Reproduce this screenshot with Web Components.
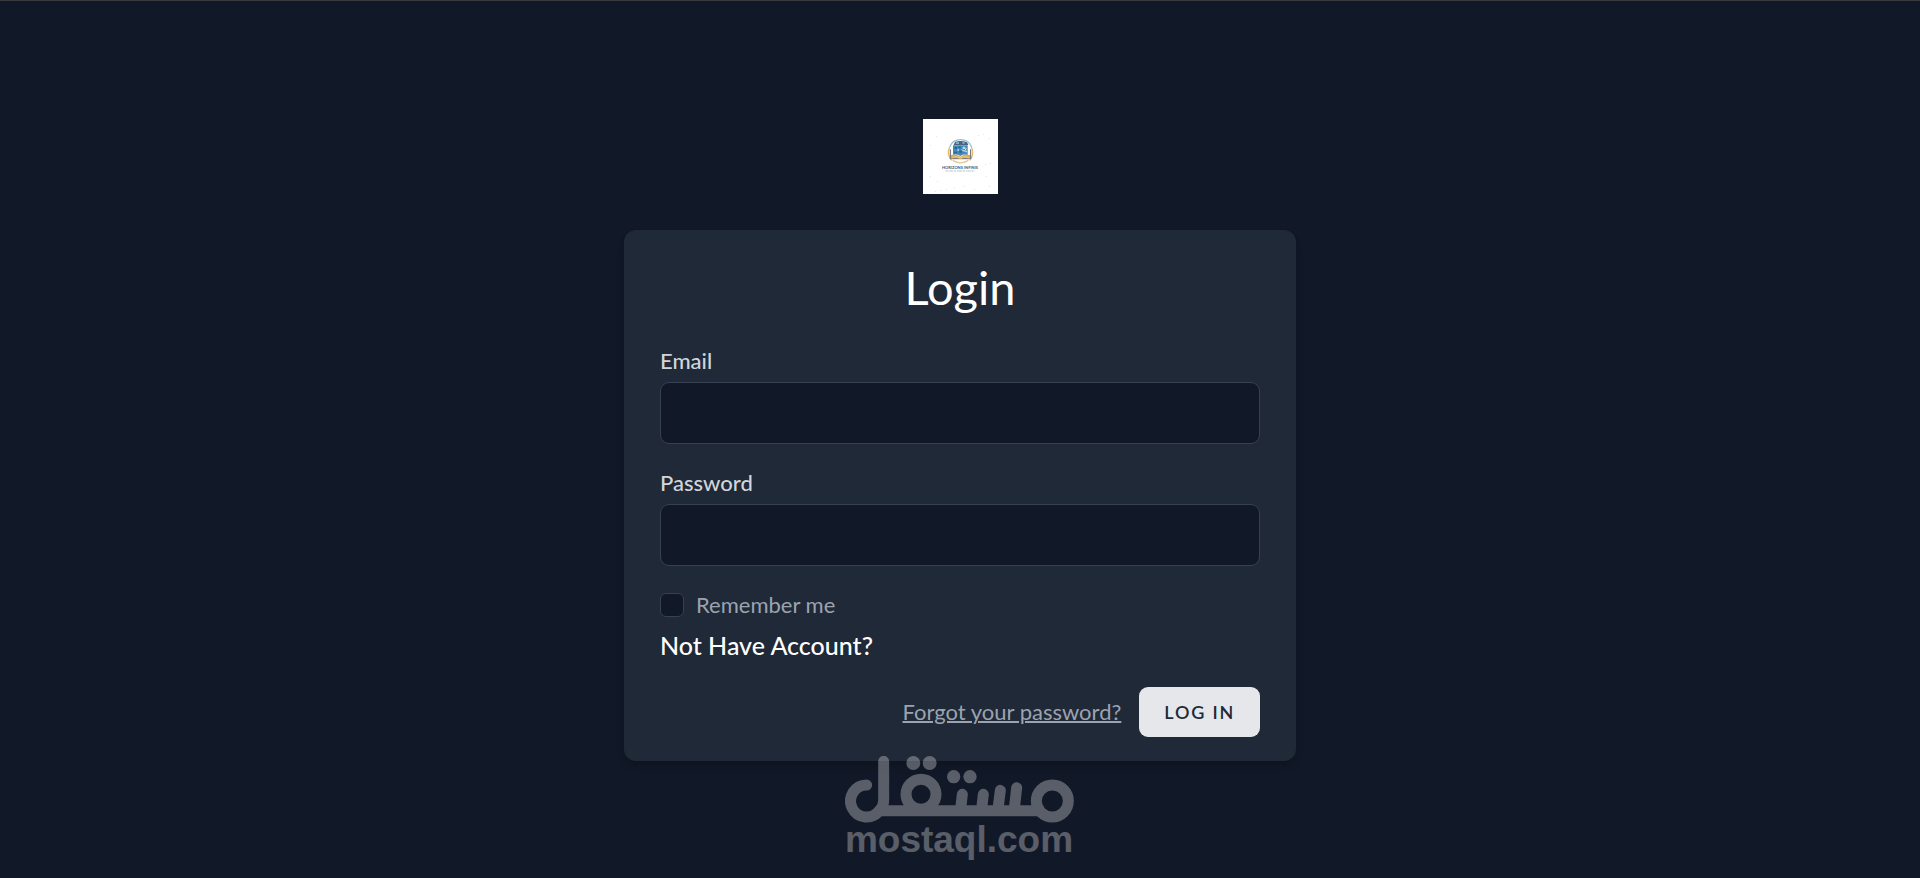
<!DOCTYPE html>
<html lang="en">
<head>
<meta charset="utf-8">
<meta name="viewport" content="width=device-width, initial-scale=1">
<title>Login</title>
<style>
    body {
        margin: 0;
        background: #111827;
        font-family: Lato, "Open Sans", sans-serif;
    }
</style>
</head>
<body>
<guest-layout>
    <app-logo slot="logo"></app-logo>
    <login-form heading="Login">
        <form-field name="email" type="email" label="Email"></form-field>
        <form-field name="password" type="password" label="Password"></form-field>
        <check-field name="remember">Remember me</check-field>
        <text-link slot="register" kind="plain" href="#register">Not Have Account?</text-link>
        <text-link slot="actions" kind="muted" href="#forgot">Forgot your password?</text-link>
        <primary-button slot="actions">Log in</primary-button>
    </login-form>
    <site-mark slot="mark">mostaql.com</site-mark>
</guest-layout>

<script>
class GuestLayout extends HTMLElement {
    constructor(){
        super();
        this.attachShadow({mode:'open'}).innerHTML = `
            <style>
                :host{
                    display: flex;
                    flex-direction: column;
                    align-items: center;
                    justify-content: center;
                    gap: 36px;
                    position: relative;
                    box-sizing: border-box;
                    min-height: 100vh;
                    padding-top: 1px;
                    border-top: 1px solid #3a3a3e;
                    background: #111827;
                }
                main{
                    box-sizing: border-box;
                    width: 100%;
                    max-width: 672px;
                    padding: 24px 36px;
                    border-radius: 12px;
                    background: #1f2937;
                    box-shadow: 0 6px 9px -1px rgba(0,0,0,.1), 0 3px 6px -2px rgba(0,0,0,.1);
                }
            </style>
            <slot name="logo"></slot>
            <main><slot></slot></main>
            <slot name="mark"></slot>
        `;
    }
}
customElements.define('guest-layout', GuestLayout);

class AppLogo extends HTMLElement {
    constructor(){
        super();
        this.attachShadow({mode:'open'}).innerHTML = `
            <style>
                :host{ display: block; }
                a, svg{ display: block; }
                svg{ width: 75px; height: 75px; background: #fff; }
            </style>
            <a href="#home" aria-label="Home">
                <svg viewBox="0 0 225 225">
                    <!-- ring -->
                    <path d="M80 83A36 36 0 0 1 146 84" fill="none" stroke="#9dbfd2" stroke-width="4"/>
                    <path d="M80 84A37 37 0 0 0 86 124M145 84A37 37 0 0 1 140 124" fill="none" stroke="#e5b96d" stroke-width="4"/>
                    <path d="M89 124Q113 139 136 124" fill="none" stroke="#e8c88f" stroke-width="4"/>
                    <!-- board -->
                    <path d="M96 69Q113 62 132 70L136 78H92Z" fill="#49647b"/>
                    <path d="M90 79H134V108Q122 104 112 111Q101 104 90 108Z" fill="#3d88bd"/>
                    <path d="M99 70h9v5h-9zM118 69h7v5h-7z" fill="#7fb1d0"/>
                    <path d="M95 84h7v6h-7zM107 82h6v5h-6zM94 98h8v5h-8zM109 95h8v6h-8z" fill="#2a658f"/>
                    <path d="M119 83h8v7h-8zM103 91h5v4h-5zM127 95h5v5h-5z" fill="#b9dcef"/>
                    <path d="M116 92l8 5 6-9" fill="none" stroke="#e9f5fb" stroke-width="3"/>
                    <!-- book -->
                    <path d="M82 91V119H143V91" fill="none" stroke="#596274" stroke-width="3"/>
                    <path d="M84 108Q100 104 112 113Q124 104 141 108V119Q124 114 112 121Q100 114 84 119Z" fill="#e2aa50"/>
                    <path d="M88 115Q102 110 112 117Q122 110 137 115" fill="none" stroke="#f5d9a6" stroke-width="2"/>
                    <text x="111" y="149" text-anchor="middle" font-family="Lato, sans-serif" font-size="12" font-weight="700" fill="#44566e">HORIZONS INFINIS</text>
                    <path d="M67 156H155" stroke="#a9c9d9" stroke-width="3" stroke-dasharray="7 2 4 1 10 2"/>
                    <!-- scattered dots -->
                    <g fill="#e3e6e8">
                        <circle cx="40" cy="53" r="2"/><circle cx="22" cy="79" r="2"/>
                        <circle cx="167" cy="49" r="2"/><circle cx="182" cy="46" r="2"/>
                        <circle cx="199" cy="59" r="2"/><circle cx="187" cy="136" r="2"/>
                        <circle cx="202" cy="133" r="2"/><circle cx="22" cy="173" r="2"/>
                        <circle cx="43" cy="187" r="2"/><circle cx="190" cy="172" r="2"/>
                        <circle cx="124" cy="202" r="2"/><circle cx="94" cy="208" r="2"/>
                        <circle cx="70" cy="211" r="2"/><circle cx="37" cy="217" r="2"/>
                        <circle cx="53" cy="214" r="2"/><circle cx="155" cy="211" r="2"/>
                        <circle cx="199" cy="202" r="2"/>
                    </g>
                </svg>
            </a>
        `;
    }
}
customElements.define('app-logo', AppLogo);

class LoginForm extends HTMLElement {
    constructor(){
        super();
        this.attachShadow({mode:'open'}).innerHTML = `
            <style>
                :host{ display: block; }
                h1{
                    margin: 0 0 26px;
                    color: #fff;
                    font-size: 47px;
                    font-weight: 400;
                    line-height: 66px;
                    text-align: center;
                }
                form{ margin: 0; }
                .fields{
                    display: flex;
                    flex-direction: column;
                    gap: 24px;
                }
                .register{ margin-top: 7px; }
                .actions{
                    display: flex;
                    align-items: center;
                    justify-content: flex-end;
                    gap: 18px;
                    margin-top: 24px;
                }
            </style>
            <h1></h1>
            <form>
                <div class="fields"><slot></slot></div>
                <div class="register"><slot name="register"></slot></div>
                <div class="actions"><slot name="actions"></slot></div>
            </form>
        `;
    }

    connectedCallback() {
        this.shadowRoot.querySelector('h1').textContent = this.getAttribute('heading');
    }
}
customElements.define('login-form', LoginForm);

class FormField extends HTMLElement {
    constructor(){
        super();
        this.attachShadow({mode:'open'}).innerHTML = `
            <style>
                :host{ display: block; }
                label{
                    display: block;
                    margin-bottom: 6px;
                    color: #d1d5db;
                    font-size: 22px;
                    font-weight: 500;
                    line-height: 30px;
                }
                input{
                    display: block;
                    box-sizing: border-box;
                    width: 100%;
                    height: 62px;
                    padding: 12px 18px;
                    border: 1px solid #374151;
                    border-radius: 9px;
                    outline: none;
                    background: #111827;
                    color: #d1d5db;
                    font: inherit;
                    font-size: 25px;
                }
                input:focus{ border-color: #4f46e5; }
            </style>
            <label for="field"></label>
            <input id="field">
        `;
    }

    connectedCallback() {
        let input = this.shadowRoot.querySelector('input');
        input.type = this.getAttribute('type');
        input.name = this.getAttribute('name');
        this.shadowRoot.querySelector('label').textContent = this.getAttribute('label');
    }
}
customElements.define('form-field', FormField);

class CheckField extends HTMLElement {
    constructor(){
        super();
        this.attachShadow({mode:'open'}).innerHTML = `
            <style>
                :host{ display: block; }
                label{
                    display: inline-flex;
                    align-items: center;
                    gap: 12px;
                    color: #9ca3af;
                    font-size: 22px;
                    line-height: 30px;
                    vertical-align: top;
                }
                input{
                    appearance: none;
                    box-sizing: border-box;
                    width: 24px;
                    height: 24px;
                    margin: 0;
                    border: 1px solid #374151;
                    border-radius: 6px;
                    background: #111827;
                }
                input:checked{ background: #4f46e5; }
            </style>
            <label for="check"><input id="check" type="checkbox"><slot></slot></label>
        `;
    }

    connectedCallback() {
        this.shadowRoot.querySelector('input').name = this.getAttribute('name');
    }
}
customElements.define('check-field', CheckField);

class TextLink extends HTMLElement {
    constructor(){
        super();
        this.attachShadow({mode:'open'}).innerHTML = `
            <style>
                :host{ display: block; }
                a{
                    display: inline-block;
                    color: #fff;
                    font-size: 25px;
                    font-weight: 500;
                    line-height: 36px;
                    text-decoration: none;
                    vertical-align: top;
                }
                :host([kind="muted"]) a{
                    color: #9ca3af;
                    font-size: 22px;
                    font-weight: 400;
                    line-height: 30px;
                    text-decoration: underline;
                    text-decoration-thickness: 2px;
                }
            </style>
            <a><slot></slot></a>
        `;
    }

    connectedCallback() {
        this.shadowRoot.querySelector('a').href = this.getAttribute('href');
    }
}
customElements.define('text-link', TextLink);

class PrimaryButton extends HTMLElement {
    constructor(){
        super();
        this.attachShadow({mode:'open'}).innerHTML = `
            <style>
                :host{ display: block; }
                button{
                    display: block;
                    padding: 12px 24px;
                    border: 1px solid transparent;
                    border-radius: 9px;
                    background: #e5e7eb;
                    color: #1f2937;
                    font: inherit;
                    font-size: 18px;
                    font-weight: 600;
                    line-height: 24px;
                    letter-spacing: 0.1em;
                    text-transform: uppercase;
                }
                button:hover{ background: #fff; }
            </style>
            <button type="submit"><slot></slot></button>
        `;
    }
}
customElements.define('primary-button', PrimaryButton);

class SiteMark extends HTMLElement {
    constructor(){
        super();
        this.attachShadow({mode:'open'}).innerHTML = `
            <style>
                :host{
                    position: absolute;
                    right: 2px;
                    bottom: 21px;
                    left: 0;
                    display: flex;
                    flex-direction: column;
                    align-items: center;
                    opacity: .3;
                    color: #fff;
                    font-family: "Liberation Sans", Arial, sans-serif;
                    font-size: 37px;
                    font-weight: 700;
                    line-height: 34px;
                    pointer-events: none;
                }
                svg{ display: block; width: 229px; height: 67px; }
            </style>
            <svg viewBox="45 45 687 201" fill="none" stroke="#fff" stroke-width="33" stroke-linecap="round" aria-hidden="true">
                <path d="M110 132A48 48 0 1 0 148 209Q161 196 161 178V61"/>
                <path d="M142 209H640" stroke-linecap="butt"/>
                <circle cx="273" cy="160" r="45"/>
                <circle cx="667" cy="180" r="48"/>
                <path d="M397 160L392 204M460 160L455 204M511 148L504 204M560 140L553 204"/>
                <g fill="#fff" stroke="none">
                    <circle cx="250" cy="66" r="21"/>
                    <circle cx="299" cy="66" r="21"/>
                    <circle cx="371" cy="107" r="20"/>
                    <circle cx="420" cy="107" r="20"/>
                </g>
            </svg>
            <span><slot></slot></span>
        `;
    }
}
customElements.define('site-mark', SiteMark);
</script>
</body>
</html>
